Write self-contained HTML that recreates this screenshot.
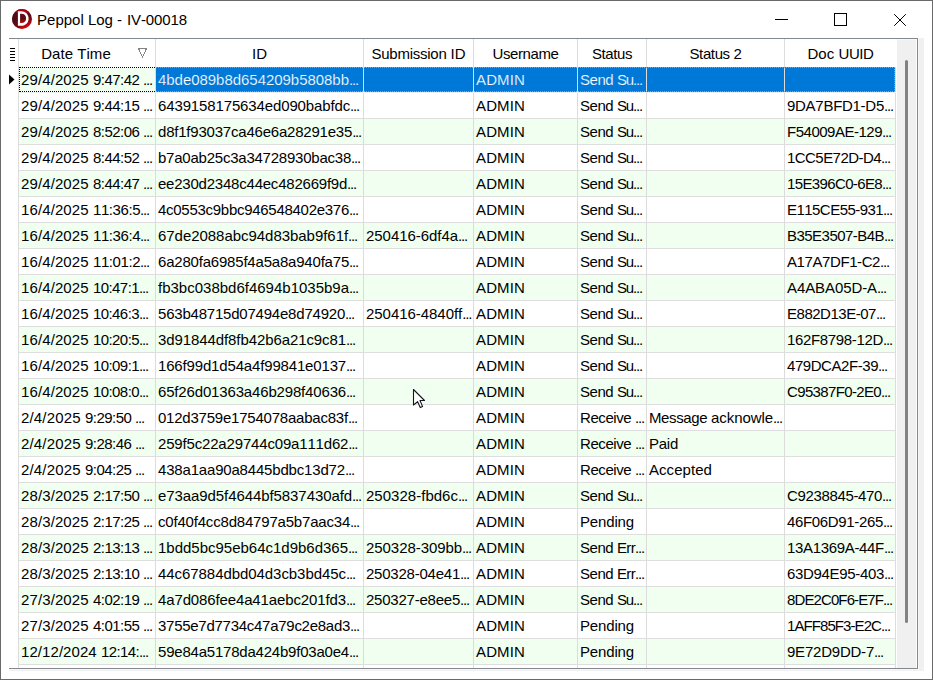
<!DOCTYPE html><html><head><meta charset="utf-8"><title>Peppol Log - IV-00018</title><style>
html,body{margin:0;padding:0;background:#fff;}
body{font-kerning:none;width:933px;height:680px;overflow:hidden;position:relative;font-family:"Liberation Sans",sans-serif;font-size:15px;color:#000;}
#win{position:absolute;left:0;top:0;width:931px;height:678px;border:1px solid #6a6a6a;background:#fff;}
.abs{position:absolute;}
#title{left:37px;top:10px;height:20px;line-height:20px;white-space:nowrap;font-size:15px;}
#panel{left:9px;top:38px;width:915px;height:633px;background:#f0f0f0;}
#grid{left:9px;top:38px;width:908px;height:629px;border-top:1px solid #828790;border-right:1px solid #828790;border-bottom:1px solid #828790;background:#fff;overflow:hidden;}
.row{position:absolute;left:10px;width:877px;height:25px;border-bottom:1px solid #dedede;}
.row.g{background:#f0fff0;}
.c{position:absolute;top:0;height:25px;line-height:25px;white-space:nowrap;overflow:hidden;border-right:1px solid #dcdcdc;padding-left:2px;box-sizing:border-box;}
.h{position:absolute;top:0;height:28px;line-height:30px;text-align:center;white-space:nowrap;overflow:hidden;border-right:1px solid #dcdcdc;box-sizing:border-box;}
.d{letter-spacing:-1.17px;}
.row.sel{border-bottom-color:#efefef;}
.sel .c.s{background:#0078d7;color:#fff;-webkit-text-stroke:0.2px #0078d7;}
</style></head><body>
<div id="win"></div>
<svg class="abs" style="left:11px;top:8px" width="22" height="22" viewBox="0 0 22 22"><defs><linearGradient id="rg" x1="0" y1="0" x2="0.25" y2="1"><stop offset="0" stop-color="#b0000c"/><stop offset="0.16" stop-color="#74101a"/><stop offset="0.55" stop-color="#5a0c14"/><stop offset="0.78" stop-color="#9c060e"/><stop offset="1" stop-color="#cc060c"/></linearGradient><linearGradient id="lg" x1="0" y1="0" x2="1" y2="0"><stop offset="0" stop-color="#4a0a10" stop-opacity="0.75"/><stop offset="0.3" stop-color="#4a0a10" stop-opacity="0.6"/><stop offset="0.5" stop-color="#4a0a10" stop-opacity="0"/></linearGradient></defs><circle cx="11" cy="11" r="10" fill="url(#rg)"/><circle cx="11" cy="11" r="10" fill="url(#lg)"/><path d="M4.6 3.3 A10 10 0 0 1 17.8 3.7 L16.4 5 Q11.5 1.6 6.2 4.6 Z" fill="#b4000c"/><path d="M9.1 12.5 L15 13 L13 15.1 H9.1 Z" fill="#b8060e" opacity="0.7"/><path d="M6.9 3.2 H10 C14.6 3.2 17.6 6.3 17.6 10.5 C17.6 14.7 14.6 17.8 10 17.8 H6.9 Z M9.1 5.8 V15.1 H10.2 C13.4 15.1 15.1 13.2 15.1 10.5 C15.1 7.8 13.4 5.8 10.2 5.8 Z" fill="#fff" fill-rule="evenodd"/></svg>
<div id="title" class="abs"><span style="letter-spacing:0.02px">Peppol </span><span style="letter-spacing:-0.05px">Log </span><span style="letter-spacing:0.42px">- </span><span style="letter-spacing:-0.13px">IV-00018</span></div>
<svg class="abs" style="left:770px;top:8px" width="150" height="24" viewBox="0 0 150 24" fill="none" stroke="#000" stroke-width="1"><path d="M5 11.5 H18"/><rect x="64.5" y="5.5" width="12" height="12"/><path d="M124.2 6.2 L135.8 17.8 M135.8 6.2 L124.2 17.8"/></svg>
<div id="panel" class="abs"></div>
<div class="abs" style="left:9px;top:38px;width:910px;height:632px;background:#f9f9f9"></div>
<div id="grid" class="abs">
<div class="abs" style="left:9px;top:0;width:1px;height:630px;background:#dcdcdc"></div>
<div class="h" style="left:10px;width:137px;padding-right:22px;"><span style="letter-spacing:0.03px">Date </span><span style="letter-spacing:0.06px">Time</span></div>
<div class="h" style="left:147px;width:208px;">ID</div>
<div class="h" style="left:355px;width:110px;"><span style="letter-spacing:-0.25px">Submission </span>ID</div>
<div class="h" style="left:465px;width:104px;"><span style="letter-spacing:-0.4px">Username</span></div>
<div class="h" style="left:569px;width:69px;"><span style="letter-spacing:-0.42px">Status</span></div>
<div class="h" style="left:638px;width:138px;"><span style="letter-spacing:-0.38px">Status </span><span style="letter-spacing:-0.34px">2</span></div>
<div class="h" style="left:776px;width:111px;border-right:0;"><span style="letter-spacing:0.04px">Doc </span><span style="letter-spacing:-0.42px">UUID</span></div>
<svg class="abs" style="left:1px;top:9px" width="6" height="13" viewBox="0 0 6 13"><path d="M0 0.5H5M0 3.5H5M0 6.5H5M0 9.5H5M0 12.5H5" stroke="#000" stroke-width="1"/></svg>
<svg class="abs" style="left:128px;top:8px" width="12" height="12" viewBox="0 0 12 12"><path d="M1.5 1.5 H9.5 L5.5 10 Z" fill="none" stroke="#858585" stroke-width="1" shape-rendering="crispEdges"/></svg>
<div class="row g sel" style="top:28px;left:10px">
<div class="c f" style="left:0px;width:137px"><span style="letter-spacing:0.11px">29/4/2025 </span><span style="letter-spacing:-0.53px">9:47:42 </span><span class="d">...</span></div>
<div class="c s" style="left:137px;width:208px"><span style="letter-spacing:-0.04px">4bde089b8d654209b5808bb</span><span class="d">...</span></div>
<div class="c s" style="left:345px;width:110px"></div>
<div class="c s" style="left:455px;width:104px"><span style="letter-spacing:0.13px">ADMIN</span></div>
<div class="c s" style="left:559px;width:69px"><span style="letter-spacing:-0.44px">Send </span><span style="letter-spacing:-1.17px">Su</span><span class="d">...</span></div>
<div class="c s" style="left:628px;width:138px"></div>
<div class="c s" style="left:766px;width:111px"></div>
</div>
<div class="row" style="top:54px;left:10px">
<div class="c f" style="left:0px;width:137px"><span style="letter-spacing:0.11px">29/4/2025 </span><span style="letter-spacing:-0.53px">9:44:15 </span><span class="d">...</span></div>
<div class="c s" style="left:137px;width:208px"><span style="letter-spacing:-0.13px">6439158175634ed090babfdc</span><span class="d">...</span></div>
<div class="c s" style="left:345px;width:110px"></div>
<div class="c s" style="left:455px;width:104px"><span style="letter-spacing:0.13px">ADMIN</span></div>
<div class="c s" style="left:559px;width:69px"><span style="letter-spacing:-0.44px">Send </span><span style="letter-spacing:-1.17px">Su</span><span class="d">...</span></div>
<div class="c s" style="left:628px;width:138px"></div>
<div class="c s" style="left:766px;width:111px"><span style="letter-spacing:-0.28px">9DA7BFD1-D5</span><span class="d">...</span></div>
</div>
<div class="row g" style="top:80px;left:10px">
<div class="c f" style="left:0px;width:137px"><span style="letter-spacing:0.11px">29/4/2025 </span><span style="letter-spacing:-0.53px">8:52:06 </span><span class="d">...</span></div>
<div class="c s" style="left:137px;width:208px"><span style="letter-spacing:-0.21px">d8f1f93037ca46e6a28291e35</span><span class="d">...</span></div>
<div class="c s" style="left:345px;width:110px"></div>
<div class="c s" style="left:455px;width:104px"><span style="letter-spacing:0.13px">ADMIN</span></div>
<div class="c s" style="left:559px;width:69px"><span style="letter-spacing:-0.44px">Send </span><span style="letter-spacing:-1.17px">Su</span><span class="d">...</span></div>
<div class="c s" style="left:628px;width:138px"></div>
<div class="c s" style="left:766px;width:111px"><span style="letter-spacing:-0.49px">F54009AE-129</span><span class="d">...</span></div>
</div>
<div class="row" style="top:106px;left:10px">
<div class="c f" style="left:0px;width:137px"><span style="letter-spacing:0.11px">29/4/2025 </span><span style="letter-spacing:-0.53px">8:44:52 </span><span class="d">...</span></div>
<div class="c s" style="left:137px;width:208px"><span style="letter-spacing:-0.23px">b7a0ab25c3a34728930bac38</span><span class="d">...</span></div>
<div class="c s" style="left:345px;width:110px"></div>
<div class="c s" style="left:455px;width:104px"><span style="letter-spacing:0.13px">ADMIN</span></div>
<div class="c s" style="left:559px;width:69px"><span style="letter-spacing:-0.44px">Send </span><span style="letter-spacing:-1.17px">Su</span><span class="d">...</span></div>
<div class="c s" style="left:628px;width:138px"></div>
<div class="c s" style="left:766px;width:111px"><span style="letter-spacing:-0.55px">1CC5E72D-D4</span><span class="d">...</span></div>
</div>
<div class="row g" style="top:132px;left:10px">
<div class="c f" style="left:0px;width:137px"><span style="letter-spacing:0.11px">29/4/2025 </span><span style="letter-spacing:-0.53px">8:44:47 </span><span class="d">...</span></div>
<div class="c s" style="left:137px;width:208px"><span style="letter-spacing:-0.22px">ee230d2348c44ec482669f9d</span><span class="d">...</span></div>
<div class="c s" style="left:345px;width:110px"></div>
<div class="c s" style="left:455px;width:104px"><span style="letter-spacing:0.13px">ADMIN</span></div>
<div class="c s" style="left:559px;width:69px"><span style="letter-spacing:-0.44px">Send </span><span style="letter-spacing:-1.17px">Su</span><span class="d">...</span></div>
<div class="c s" style="left:628px;width:138px"></div>
<div class="c s" style="left:766px;width:111px"><span style="letter-spacing:-0.63px">15E396C0-6E8</span><span class="d">...</span></div>
</div>
<div class="row" style="top:158px;left:10px">
<div class="c f" style="left:0px;width:137px"><span style="letter-spacing:0.11px">16/4/2025 </span><span style="letter-spacing:-0.42px">11:36:5</span><span class="d">...</span></div>
<div class="c s" style="left:137px;width:208px"><span style="letter-spacing:-0.28px">4c0553c9bbc946548402e376</span><span class="d">...</span></div>
<div class="c s" style="left:345px;width:110px"></div>
<div class="c s" style="left:455px;width:104px"><span style="letter-spacing:0.13px">ADMIN</span></div>
<div class="c s" style="left:559px;width:69px"><span style="letter-spacing:-0.44px">Send </span><span style="letter-spacing:-1.17px">Su</span><span class="d">...</span></div>
<div class="c s" style="left:628px;width:138px"></div>
<div class="c s" style="left:766px;width:111px"><span style="letter-spacing:-0.54px">E115CE55-931</span><span class="d">...</span></div>
</div>
<div class="row g" style="top:184px;left:10px">
<div class="c f" style="left:0px;width:137px"><span style="letter-spacing:0.11px">16/4/2025 </span><span style="letter-spacing:-0.42px">11:36:4</span><span class="d">...</span></div>
<div class="c s" style="left:137px;width:208px"><span style="letter-spacing:-0.04px">67de2088abc94d83bab9f61f</span><span class="d">...</span></div>
<div class="c s" style="left:345px;width:110px"><span style="letter-spacing:-0.05px">250416-6df4a</span><span class="d">...</span></div>
<div class="c s" style="left:455px;width:104px"><span style="letter-spacing:0.13px">ADMIN</span></div>
<div class="c s" style="left:559px;width:69px"><span style="letter-spacing:-0.44px">Send </span><span style="letter-spacing:-1.17px">Su</span><span class="d">...</span></div>
<div class="c s" style="left:628px;width:138px"></div>
<div class="c s" style="left:766px;width:111px"><span style="letter-spacing:-0.53px">B35E3507-B4B</span><span class="d">...</span></div>
</div>
<div class="row" style="top:210px;left:10px">
<div class="c f" style="left:0px;width:137px"><span style="letter-spacing:0.11px">16/4/2025 </span><span style="letter-spacing:-0.42px">11:01:2</span><span class="d">...</span></div>
<div class="c s" style="left:137px;width:208px"><span style="letter-spacing:-0.2px">6a280fa6985f4a5a8a940fa75</span><span class="d">...</span></div>
<div class="c s" style="left:345px;width:110px"></div>
<div class="c s" style="left:455px;width:104px"><span style="letter-spacing:0.13px">ADMIN</span></div>
<div class="c s" style="left:559px;width:69px"><span style="letter-spacing:-0.44px">Send </span><span style="letter-spacing:-1.17px">Su</span><span class="d">...</span></div>
<div class="c s" style="left:628px;width:138px"></div>
<div class="c s" style="left:766px;width:111px"><span style="letter-spacing:-0.41px">A17A7DF1-C2</span><span class="d">...</span></div>
</div>
<div class="row g" style="top:236px;left:10px">
<div class="c f" style="left:0px;width:137px"><span style="letter-spacing:0.11px">16/4/2025 </span><span style="letter-spacing:-0.58px">10:47:1</span><span class="d">...</span></div>
<div class="c s" style="left:137px;width:208px">fb3bc038bd6f4694b1035b9a<span class="d">...</span></div>
<div class="c s" style="left:345px;width:110px"></div>
<div class="c s" style="left:455px;width:104px"><span style="letter-spacing:0.13px">ADMIN</span></div>
<div class="c s" style="left:559px;width:69px"><span style="letter-spacing:-0.44px">Send </span><span style="letter-spacing:-1.17px">Su</span><span class="d">...</span></div>
<div class="c s" style="left:628px;width:138px"></div>
<div class="c s" style="left:766px;width:111px"><span style="letter-spacing:-0.09px">A4ABA05D-A</span><span class="d">...</span></div>
</div>
<div class="row" style="top:262px;left:10px">
<div class="c f" style="left:0px;width:137px"><span style="letter-spacing:0.11px">16/4/2025 </span><span style="letter-spacing:-0.58px">10:46:3</span><span class="d">...</span></div>
<div class="c s" style="left:137px;width:208px"><span style="letter-spacing:-0.21px">563b48715d07494e8d74920</span><span class="d">...</span></div>
<div class="c s" style="left:345px;width:110px"><span style="letter-spacing:-0.04px">250416-4840ff</span><span class="d">...</span></div>
<div class="c s" style="left:455px;width:104px"><span style="letter-spacing:0.13px">ADMIN</span></div>
<div class="c s" style="left:559px;width:69px"><span style="letter-spacing:-0.44px">Send </span><span style="letter-spacing:-1.17px">Su</span><span class="d">...</span></div>
<div class="c s" style="left:628px;width:138px"></div>
<div class="c s" style="left:766px;width:111px"><span style="letter-spacing:-0.48px">E882D13E-07</span><span class="d">...</span></div>
</div>
<div class="row g" style="top:288px;left:10px">
<div class="c f" style="left:0px;width:137px"><span style="letter-spacing:0.11px">16/4/2025 </span><span style="letter-spacing:-0.58px">10:20:5</span><span class="d">...</span></div>
<div class="c s" style="left:137px;width:208px"><span style="letter-spacing:-0.09px">3d91844df8fb42b6a21c9c81</span><span class="d">...</span></div>
<div class="c s" style="left:345px;width:110px"></div>
<div class="c s" style="left:455px;width:104px"><span style="letter-spacing:0.13px">ADMIN</span></div>
<div class="c s" style="left:559px;width:69px"><span style="letter-spacing:-0.44px">Send </span><span style="letter-spacing:-1.17px">Su</span><span class="d">...</span></div>
<div class="c s" style="left:628px;width:138px"></div>
<div class="c s" style="left:766px;width:111px"><span style="letter-spacing:-0.34px">162F8798-12D</span><span class="d">...</span></div>
</div>
<div class="row" style="top:314px;left:10px">
<div class="c f" style="left:0px;width:137px"><span style="letter-spacing:0.11px">16/4/2025 </span><span style="letter-spacing:-0.58px">10:09:1</span><span class="d">...</span></div>
<div class="c s" style="left:137px;width:208px"><span style="letter-spacing:-0.16px">166f99d1d54a4f99841e0137</span><span class="d">...</span></div>
<div class="c s" style="left:345px;width:110px"></div>
<div class="c s" style="left:455px;width:104px"><span style="letter-spacing:0.13px">ADMIN</span></div>
<div class="c s" style="left:559px;width:69px"><span style="letter-spacing:-0.44px">Send </span><span style="letter-spacing:-1.17px">Su</span><span class="d">...</span></div>
<div class="c s" style="left:628px;width:138px"></div>
<div class="c s" style="left:766px;width:111px"><span style="letter-spacing:-0.44px">479DCA2F-39</span><span class="d">...</span></div>
</div>
<div class="row g" style="top:340px;left:10px">
<div class="c f" style="left:0px;width:137px"><span style="letter-spacing:0.11px">16/4/2025 </span><span style="letter-spacing:-0.58px">10:08:0</span><span class="d">...</span></div>
<div class="c s" style="left:137px;width:208px"><span style="letter-spacing:-0.16px">65f26d01363a46b298f40636</span><span class="d">...</span></div>
<div class="c s" style="left:345px;width:110px"></div>
<div class="c s" style="left:455px;width:104px"><span style="letter-spacing:0.13px">ADMIN</span></div>
<div class="c s" style="left:559px;width:69px"><span style="letter-spacing:-0.44px">Send </span><span style="letter-spacing:-1.17px">Su</span><span class="d">...</span></div>
<div class="c s" style="left:628px;width:138px"></div>
<div class="c s" style="left:766px;width:111px"><span style="letter-spacing:-0.64px">C95387F0-2E0</span><span class="d">...</span></div>
</div>
<div class="row" style="top:366px;left:10px">
<div class="c f" style="left:0px;width:137px"><span style="letter-spacing:0.16px">2/4/2025 </span><span style="letter-spacing:-0.53px">9:29:50 </span><span class="d">...</span></div>
<div class="c s" style="left:137px;width:208px"><span style="letter-spacing:-0.22px">012d3759e1754078aabac83f</span><span class="d">...</span></div>
<div class="c s" style="left:345px;width:110px"></div>
<div class="c s" style="left:455px;width:104px"><span style="letter-spacing:0.13px">ADMIN</span></div>
<div class="c s" style="left:559px;width:69px"><span style="letter-spacing:-0.42px">Receive </span><span class="d">...</span></div>
<div class="c s" style="left:628px;width:138px"><span style="letter-spacing:-0.38px">Message </span><span style="letter-spacing:-0.07px">acknowle</span><span class="d">...</span></div>
<div class="c s" style="left:766px;width:111px"></div>
</div>
<div class="row g" style="top:392px;left:10px">
<div class="c f" style="left:0px;width:137px"><span style="letter-spacing:0.16px">2/4/2025 </span><span style="letter-spacing:-0.53px">9:28:46 </span><span class="d">...</span></div>
<div class="c s" style="left:137px;width:208px"><span style="letter-spacing:-0.17px">259f5c22a29744c09a111d62</span><span class="d">...</span></div>
<div class="c s" style="left:345px;width:110px"></div>
<div class="c s" style="left:455px;width:104px"><span style="letter-spacing:0.13px">ADMIN</span></div>
<div class="c s" style="left:559px;width:69px"><span style="letter-spacing:-0.42px">Receive </span><span class="d">...</span></div>
<div class="c s" style="left:628px;width:138px"><span style="letter-spacing:-0.26px">Paid</span></div>
<div class="c s" style="left:766px;width:111px"></div>
</div>
<div class="row" style="top:418px;left:10px">
<div class="c f" style="left:0px;width:137px"><span style="letter-spacing:0.16px">2/4/2025 </span><span style="letter-spacing:-0.53px">9:04:25 </span><span class="d">...</span></div>
<div class="c s" style="left:137px;width:208px"><span style="letter-spacing:-0.18px">438a1aa90a8445bdbc13d72</span><span class="d">...</span></div>
<div class="c s" style="left:345px;width:110px"></div>
<div class="c s" style="left:455px;width:104px"><span style="letter-spacing:0.13px">ADMIN</span></div>
<div class="c s" style="left:559px;width:69px"><span style="letter-spacing:-0.42px">Receive </span><span class="d">...</span></div>
<div class="c s" style="left:628px;width:138px"><span style="letter-spacing:0.06px">Accepted</span></div>
<div class="c s" style="left:766px;width:111px"></div>
</div>
<div class="row g" style="top:444px;left:10px">
<div class="c f" style="left:0px;width:137px"><span style="letter-spacing:0.11px">28/3/2025 </span><span style="letter-spacing:-0.53px">2:17:50 </span><span class="d">...</span></div>
<div class="c s" style="left:137px;width:208px"><span style="letter-spacing:-0.08px">e73aa9d5f4644bf5837430afd</span><span class="d">...</span></div>
<div class="c s" style="left:345px;width:110px"><span style="letter-spacing:0.02px">250328-fbd6c</span><span class="d">...</span></div>
<div class="c s" style="left:455px;width:104px"><span style="letter-spacing:0.13px">ADMIN</span></div>
<div class="c s" style="left:559px;width:69px"><span style="letter-spacing:-0.44px">Send </span><span style="letter-spacing:-1.17px">Su</span><span class="d">...</span></div>
<div class="c s" style="left:628px;width:138px"></div>
<div class="c s" style="left:766px;width:111px"><span style="letter-spacing:-0.35px">C9238845-470</span><span class="d">...</span></div>
</div>
<div class="row" style="top:470px;left:10px">
<div class="c f" style="left:0px;width:137px"><span style="letter-spacing:0.11px">28/3/2025 </span><span style="letter-spacing:-0.53px">2:17:25 </span><span class="d">...</span></div>
<div class="c s" style="left:137px;width:208px"><span style="letter-spacing:-0.19px">c0f40f4cc8d84797a5b7aac34</span><span class="d">...</span></div>
<div class="c s" style="left:345px;width:110px"></div>
<div class="c s" style="left:455px;width:104px"><span style="letter-spacing:0.13px">ADMIN</span></div>
<div class="c s" style="left:559px;width:69px"><span style="letter-spacing:-0.15px">Pending</span></div>
<div class="c s" style="left:628px;width:138px"></div>
<div class="c s" style="left:766px;width:111px"><span style="letter-spacing:-0.34px">46F06D91-265</span><span class="d">...</span></div>
</div>
<div class="row g" style="top:496px;left:10px">
<div class="c f" style="left:0px;width:137px"><span style="letter-spacing:0.11px">28/3/2025 </span><span style="letter-spacing:-0.53px">2:13:13 </span><span class="d">...</span></div>
<div class="c s" style="left:137px;width:208px"><span style="letter-spacing:-0.01px">1bdd5bc95eb64c1d9b6d365</span><span class="d">...</span></div>
<div class="c s" style="left:345px;width:110px"><span style="letter-spacing:-0.06px">250328-309bb</span><span class="d">...</span></div>
<div class="c s" style="left:455px;width:104px"><span style="letter-spacing:0.13px">ADMIN</span></div>
<div class="c s" style="left:559px;width:69px"><span style="letter-spacing:-0.44px">Send </span><span style="letter-spacing:-0.67px">Err</span><span class="d">...</span></div>
<div class="c s" style="left:628px;width:138px"></div>
<div class="c s" style="left:766px;width:111px"><span style="letter-spacing:-0.33px">13A1369A-44F</span><span class="d">...</span></div>
</div>
<div class="row" style="top:522px;left:10px">
<div class="c f" style="left:0px;width:137px"><span style="letter-spacing:0.11px">28/3/2025 </span><span style="letter-spacing:-0.53px">2:13:10 </span><span class="d">...</span></div>
<div class="c s" style="left:137px;width:208px"><span style="letter-spacing:-0.06px">44c67884dbd04d3cb3bd45c</span><span class="d">...</span></div>
<div class="c s" style="left:345px;width:110px"><span style="letter-spacing:-0.23px">250328-04e41</span><span class="d">...</span></div>
<div class="c s" style="left:455px;width:104px"><span style="letter-spacing:0.13px">ADMIN</span></div>
<div class="c s" style="left:559px;width:69px"><span style="letter-spacing:-0.44px">Send </span><span style="letter-spacing:-0.67px">Err</span><span class="d">...</span></div>
<div class="c s" style="left:628px;width:138px"></div>
<div class="c s" style="left:766px;width:111px"><span style="letter-spacing:-0.33px">63D94E95-403</span><span class="d">...</span></div>
</div>
<div class="row g" style="top:548px;left:10px">
<div class="c f" style="left:0px;width:137px"><span style="letter-spacing:0.11px">27/3/2025 </span><span style="letter-spacing:-0.53px">4:02:19 </span><span class="d">...</span></div>
<div class="c s" style="left:137px;width:208px"><span style="letter-spacing:-0.13px">4a7d086fee4a41aebc201fd3</span><span class="d">...</span></div>
<div class="c s" style="left:345px;width:110px"><span style="letter-spacing:-0.23px">250327-e8ee5</span><span class="d">...</span></div>
<div class="c s" style="left:455px;width:104px"><span style="letter-spacing:0.13px">ADMIN</span></div>
<div class="c s" style="left:559px;width:69px"><span style="letter-spacing:-0.44px">Send </span><span style="letter-spacing:-1.17px">Su</span><span class="d">...</span></div>
<div class="c s" style="left:628px;width:138px"></div>
<div class="c s" style="left:766px;width:111px"><span style="letter-spacing:-0.89px">8DE2C0F6-E7F</span><span class="d">...</span></div>
</div>
<div class="row" style="top:574px;left:10px">
<div class="c f" style="left:0px;width:137px"><span style="letter-spacing:0.11px">27/3/2025 </span><span style="letter-spacing:-0.53px">4:01:55 </span><span class="d">...</span></div>
<div class="c s" style="left:137px;width:208px"><span style="letter-spacing:-0.27px">3755e7d7734c47a79c2e8ad3</span><span class="d">...</span></div>
<div class="c s" style="left:345px;width:110px"></div>
<div class="c s" style="left:455px;width:104px"><span style="letter-spacing:0.13px">ADMIN</span></div>
<div class="c s" style="left:559px;width:69px"><span style="letter-spacing:-0.15px">Pending</span></div>
<div class="c s" style="left:628px;width:138px"></div>
<div class="c s" style="left:766px;width:111px"><span style="letter-spacing:-0.92px">1AFF85F3-E2C</span><span class="d">...</span></div>
</div>
<div class="row g" style="top:600px;left:10px">
<div class="c f" style="left:0px;width:137px"><span style="letter-spacing:0.07px">12/12/2024 </span><span style="letter-spacing:-0.62px">12:14:</span><span class="d">...</span></div>
<div class="c s" style="left:137px;width:208px"><span style="letter-spacing:-0.21px">59e84a5178da424b9f03a0e4</span><span class="d">...</span></div>
<div class="c s" style="left:345px;width:110px"></div>
<div class="c s" style="left:455px;width:104px"><span style="letter-spacing:0.13px">ADMIN</span></div>
<div class="c s" style="left:559px;width:69px"><span style="letter-spacing:-0.15px">Pending</span></div>
<div class="c s" style="left:628px;width:138px"></div>
<div class="c s" style="left:766px;width:111px"><span style="letter-spacing:-0.22px">9E72D9DD-7</span><span class="d">...</span></div>
</div>
<div class="row" style="top:626px;left:10px">
<div class="c f" style="left:0px;width:137px"></div>
<div class="c s" style="left:137px;width:208px"></div>
<div class="c s" style="left:345px;width:110px"></div>
<div class="c s" style="left:455px;width:104px"></div>
<div class="c s" style="left:559px;width:69px"></div>
<div class="c s" style="left:628px;width:138px"></div>
<div class="c s" style="left:766px;width:111px"></div>
</div>
<div class="abs" style="left:10px;top:28px;width:135px;height:23px;border:1px dotted #000;border-right:0"></div>
<div class="abs" style="left:147px;top:28px;width:738px;height:23px;border:1px dotted #ff8728;border-left:0"></div>
<svg class="abs" style="left:0px;top:35px" width="7" height="11" viewBox="0 0 7 11"><path d="M0 0.5 L5.5 5.5 L0 10.5 Z" fill="#000"/></svg>
<div class="abs" style="left:887px;top:0;width:2px;height:630px;background:#fff"></div>
<div class="abs" style="left:888px;top:0;width:19px;height:628px;background:#f0f0f0;border-top:1px solid #f8f8f8"></div>
<div class="abs" style="left:896px;top:21px;width:3px;height:563px;background:#828282;border-radius:1.5px"></div>
</div>
<svg class="abs" style="left:412px;top:388px" width="16" height="22" viewBox="0 0 16 22"><path d="M1.5 1.5 V17 L5.6 13.7 L8.3 19.6 L10.6 18.6 L8 12.5 H12.5 Z" fill="#fff" stroke="#14141e" stroke-width="1.1" stroke-linejoin="round"/></svg>
</body></html>
